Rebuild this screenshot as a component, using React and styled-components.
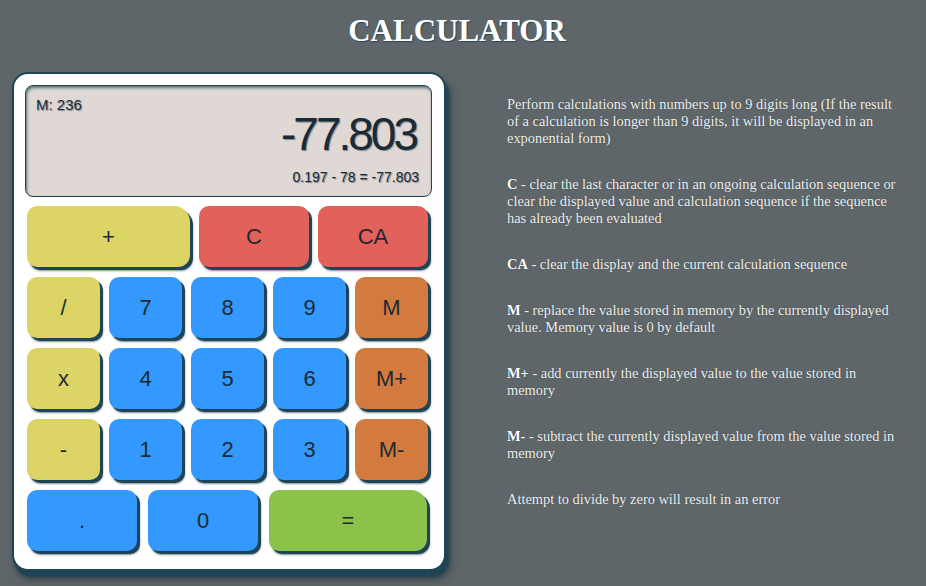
import React from 'react';
import styled, { createGlobalStyle } from 'styled-components';

const GlobalStyle = createGlobalStyle`
  html, body {
    margin: 0;
    padding: 0;
    background: #5f6669;
  }
  body {
    font-family: "Liberation Serif", "Times New Roman", serif;
  }
`;

const Page = styled.div`
  width: 926px;
  height: 586px;
  overflow: hidden;
`;

const Title = styled.h1`
  margin: 13px 0 23px;
  padding-right: 12px;
  text-align: center;
  font-family: "Liberation Serif", serif;
  font-size: 31px;
  font-weight: bold;
  line-height: 36px;
  color: #ffffff;
  text-shadow: 1px 1px 1px #24485a;
`;

const Main = styled.main`
  display: flex;
  align-items: flex-start;
  gap: 61px;
  padding-left: 12px;
`;

const Calculator = styled.div`
  box-sizing: border-box;
  width: 434px;
  padding: 11px 12px 18px 11px;
  background: #ffffff;
  border: 2px solid #1f4455;
  border-radius: 16px;
  box-shadow: 3px 6px 3px #1f4455, 4px 8px 8px rgba(20, 40, 50, 0.6);
`;

const Screen = styled.div`
  display: flex;
  flex-direction: column;
  padding: 11px 12px 11px 10px;
  background: #e0d8d4;
  border: 1px solid #1f4455;
  border-radius: 8px;
  box-shadow: inset 1px 2px 3px rgba(31, 68, 85, 0.7);
  font-family: "Liberation Sans", Arial, sans-serif;
  color: #1b2a35;
  text-shadow: 1px 1px 1px rgba(35, 72, 90, 0.55);
`;

const Memory = styled.div`
  font-size: 15px;
  line-height: 15px;
`;

const Value = styled.div`
  padding-right: 3px;
  text-align: right;
  font-size: 46px;
  line-height: 44px;
  letter-spacing: -3px;
`;

const Sequence = styled.div`
  margin-top: 13px;
  text-align: right;
  font-size: 14px;
  line-height: 16px;
`;

const Keys = styled.div`
  display: flex;
  flex-direction: column;
  gap: 10px;
  margin-top: 9px;
  padding-left: 2px;
`;

const Row = styled.div`
  display: grid;
  grid-template-columns: ${(p) => p.$cols};
  column-gap: ${(p) => p.$gap}px;
`;

const colors = {
  op: '#ddd466',
  clear: '#e2615a',
  num: '#3399fe',
  mem: '#d37a3e',
  eq: '#8bc34a',
};

const Key = styled.button`
  height: 61px;
  padding: 0;
  border: none;
  border-radius: ${(p) => (p.$wide ? '10px 16px 12px 10px' : '10px')};
  background: ${(p) => colors[p.$kind]};
  box-shadow: 3px 3px 0 #1f4455, 3px 4px 2px rgba(31, 68, 85, 0.6);
  font-family: "Liberation Sans", Arial, sans-serif;
  font-size: 22px;
  color: #1b2a35;
  cursor: pointer;
`;

const Help = styled.section`
  width: 396px;
  padding-top: 24px;
  color: #f0f0f0;
  font-size: 14.4px;
  line-height: 17px;
  text-shadow: 0 0 1px rgba(20, 30, 35, 0.6);
`;

const Para = styled.p`
  margin: 0 0 29px;
  b {
    color: #ffffff;
  }
`;

const rows = [
  { cols: '163px 110px 110px', gap: 9, keys: [['+', 'op', true], ['C', 'clear'], ['CA', 'clear']] },
  { cols: 'repeat(5, 73px)', gap: 9, keys: [['/', 'op'], ['7', 'num'], ['8', 'num'], ['9', 'num'], ['M', 'mem']] },
  { cols: 'repeat(5, 73px)', gap: 9, keys: [['x', 'op'], ['4', 'num'], ['5', 'num'], ['6', 'num'], ['M+', 'mem']] },
  { cols: 'repeat(5, 73px)', gap: 9, keys: [['-', 'op'], ['1', 'num'], ['2', 'num'], ['3', 'num'], ['M-', 'mem']] },
  { cols: '110px 110px 158px', gap: 11, keys: [['.', 'num'], ['0', 'num'], ['=', 'eq', true]] },
];

export default function App() {
  return (
    <Page>
      <GlobalStyle />
      <Title>CALCULATOR</Title>
      <Main>
        <Calculator>
          <Screen>
            <Memory>M: 236</Memory>
            <Value>-77.803</Value>
            <Sequence>0.197 - 78 = -77.803</Sequence>
          </Screen>
          <Keys>
            {rows.map((row, i) => (
              <Row key={i} $cols={row.cols} $gap={row.gap}>
                {row.keys.map(([label, kind, wide]) => (
                  <Key key={label} $kind={kind} $wide={wide}>
                    {label}
                  </Key>
                ))}
              </Row>
            ))}
          </Keys>
        </Calculator>
        <Help>
          <Para>
            Perform calculations with numbers up to 9 digits long (If the result of a calculation is
            longer than 9 digits, it will be displayed in an exponential form)
          </Para>
          <Para>
            <b>C</b> - clear the last character or in an ongoing calculation sequence or clear the
            displayed value and calculation sequence if the sequence has already been evaluated
          </Para>
          <Para>
            <b>CA</b> - clear the display and the current calculation sequence
          </Para>
          <Para>
            <b>M</b> - replace the value stored in memory by the currently displayed value. Memory
            value is 0 by default
          </Para>
          <Para>
            <b>M+</b> - add currently the displayed value to the value stored in memory
          </Para>
          <Para>
            <b>M-</b> - subtract the currently displayed value from the value stored in memory
          </Para>
          <Para>Attempt to divide by zero will result in an error</Para>
        </Help>
      </Main>
    </Page>
  );
}
